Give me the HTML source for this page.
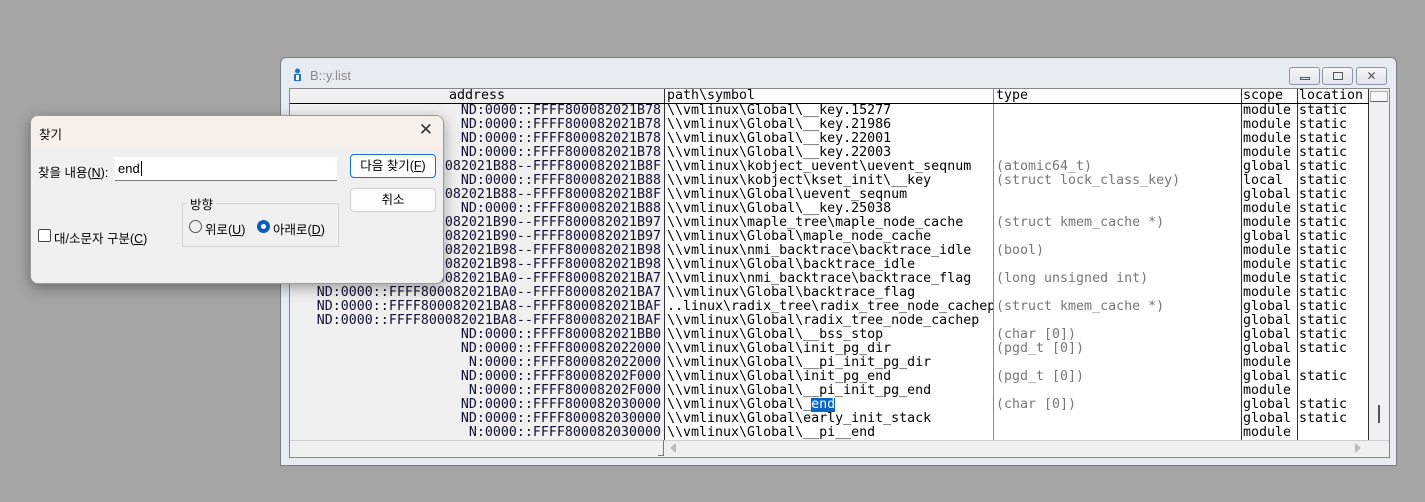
<!DOCTYPE html>
<html><head><meta charset="utf-8"><style>
*{margin:0;padding:0;box-sizing:border-box}
body{width:1425px;height:502px;background:#a5a5a5;position:relative;overflow:hidden;font-family:"DejaVu Sans Mono",monospace}
.win{position:absolute;left:280px;top:57px;width:1117px;height:409px;background:#e6ecf2;border:1px solid #7a7a7a;border-radius:6px 6px 0 0}
.title{position:absolute;left:29px;top:10px;font:13px "Liberation Sans",sans-serif;color:#8a8a8a}
.btn{position:absolute;top:9px;width:31px;height:18px;border:1px solid #8a96a4;border-radius:3px;background:linear-gradient(#f4f6f9,#e2e6ec)}
.tbl{position:absolute;left:8px;top:30px;width:1101px;height:370px;background:#f0f0f0;border:1px solid #888;overflow:hidden}
.col{position:absolute;top:0;height:351px;overflow:hidden;font-size:13.3px;line-height:14px;white-space:nowrap}
.hd{height:15px;border-bottom:1px solid #000;line-height:14px}
.r{height:14px;display:flex;overflow:hidden}
.addr .r{justify-content:flex-end;color:#101030;padding-right:3px}
.addr .hd{text-align:center}
.vl{position:absolute;top:0;width:1px;height:351px;background:#333}
.dlg{position:absolute;left:30px;top:115px;width:414px;height:169px;background:#f0f0f0;border-radius:8px;box-shadow:0 4px 14px rgba(0,0,0,.35);border:1px solid #9a9a9a;font:12.5px "Liberation Sans","Noto Sans CJK KR",sans-serif;color:#000;overflow:hidden}
.dt{height:33px;background:#f8f1eb;padding:8px 0 0 8px}
.db{position:absolute;border:1px solid #d0d0d0;border-radius:4px;background:#fdfdfd;text-align:center;line-height:22px;width:86px;height:24px}
</style></head><body>
<div class="win">
<svg style="position:absolute;left:11px;top:10px" width="11" height="14"><circle cx="5.5" cy="3" r="2.5" fill="#2a6ec0"/><rect x="2" y="6" width="7" height="7" fill="#2a6ec0"/><rect x="4" y="7" width="3" height="5" fill="#fff"/></svg>
<div class="title">B::y.list</div>
<div class="btn" style="left:1008px"><div style="position:absolute;left:10px;top:9px;width:10px;height:3px;border:1px solid #555"></div></div>
<div class="btn" style="left:1041px"><div style="position:absolute;left:10px;top:4px;width:10px;height:8px;border:1px solid #555"></div></div>
<div class="btn" style="left:1075px;font:12px sans-serif;text-align:center;color:#555;line-height:16px">✕</div>
<div class="tbl">
<div class="col addr" style="left:0;width:374px">
<div class="hd">address</div>
<div class="r">ND:0000::FFFF800082021B78</div>
<div class="r">ND:0000::FFFF800082021B78</div>
<div class="r">ND:0000::FFFF800082021B78</div>
<div class="r">ND:0000::FFFF800082021B78</div>
<div class="r">ND:0000::FFFF800082021B88--FFFF800082021B8F</div>
<div class="r">ND:0000::FFFF800082021B88</div>
<div class="r">ND:0000::FFFF800082021B88--FFFF800082021B8F</div>
<div class="r">ND:0000::FFFF800082021B88</div>
<div class="r">ND:0000::FFFF800082021B90--FFFF800082021B97</div>
<div class="r">ND:0000::FFFF800082021B90--FFFF800082021B97</div>
<div class="r">ND:0000::FFFF800082021B98--FFFF800082021B98</div>
<div class="r">ND:0000::FFFF800082021B98--FFFF800082021B98</div>
<div class="r">ND:0000::FFFF800082021BA0--FFFF800082021BA7</div>
<div class="r">ND:0000::FFFF800082021BA0--FFFF800082021BA7</div>
<div class="r">ND:0000::FFFF800082021BA8--FFFF800082021BAF</div>
<div class="r">ND:0000::FFFF800082021BA8--FFFF800082021BAF</div>
<div class="r">ND:0000::FFFF800082021BB0</div>
<div class="r">ND:0000::FFFF800082022000</div>
<div class="r">N:0000::FFFF800082022000</div>
<div class="r">ND:0000::FFFF80008202F000</div>
<div class="r">N:0000::FFFF80008202F000</div>
<div class="r">ND:0000::FFFF800082030000</div>
<div class="r">ND:0000::FFFF800082030000</div>
<div class="r">N:0000::FFFF800082030000</div>
</div>
<div class="col" style="left:375px;width:703px;background:#fff"></div>
<div class="col" style="left:376px;width:327px;padding-left:1px">
<div class="hd">path\symbol</div>
<div class="r">\\vmlinux\Global\__key.15277</div>
<div class="r">\\vmlinux\Global\__key.21986</div>
<div class="r">\\vmlinux\Global\__key.22001</div>
<div class="r">\\vmlinux\Global\__key.22003</div>
<div class="r">\\vmlinux\kobject_uevent\uevent_seqnum</div>
<div class="r">\\vmlinux\kobject\kset_init\__key</div>
<div class="r">\\vmlinux\Global\uevent_seqnum</div>
<div class="r">\\vmlinux\Global\__key.25038</div>
<div class="r">\\vmlinux\maple_tree\maple_node_cache</div>
<div class="r">\\vmlinux\Global\maple_node_cache</div>
<div class="r">\\vmlinux\nmi_backtrace\backtrace_idle</div>
<div class="r">\\vmlinux\Global\backtrace_idle</div>
<div class="r">\\vmlinux\nmi_backtrace\backtrace_flag</div>
<div class="r">\\vmlinux\Global\backtrace_flag</div>
<div class="r">..linux\radix_tree\radix_tree_node_cachep</div>
<div class="r">\\vmlinux\Global\radix_tree_node_cachep</div>
<div class="r">\\vmlinux\Global\__bss_stop</div>
<div class="r">\\vmlinux\Global\init_pg_dir</div>
<div class="r">\\vmlinux\Global\__pi_init_pg_dir</div>
<div class="r">\\vmlinux\Global\init_pg_end</div>
<div class="r">\\vmlinux\Global\__pi_init_pg_end</div>
<div class="r">\\vmlinux\Global\_<span style="background:#0a64c8;color:#fff">end</span></div>
<div class="r">\\vmlinux\Global\early_init_stack</div>
<div class="r">\\vmlinux\Global\__pi__end</div>
</div>
<div class="col" style="left:704px;width:247px;padding-left:2px;color:#777">
<div class="hd" style="color:#000">type</div>
<div class="r"></div><div class="r"></div><div class="r"></div><div class="r"></div>
<div class="r">(atomic64_t)</div>
<div class="r">(struct lock_class_key)</div>
<div class="r"></div><div class="r"></div>
<div class="r">(struct kmem_cache *)</div>
<div class="r"></div>
<div class="r">(bool)</div>
<div class="r"></div>
<div class="r">(long unsigned int)</div>
<div class="r"></div>
<div class="r">(struct kmem_cache *)</div>
<div class="r"></div>
<div class="r">(char [0])</div>
<div class="r">(pgd_t [0])</div>
<div class="r"></div>
<div class="r">(pgd_t [0])</div>
<div class="r"></div>
<div class="r">(char [0])</div>
<div class="r"></div><div class="r"></div>
</div>
<div class="col" style="left:952px;width:55px;padding-left:1px">
<div class="hd">scope</div>
<div class="r">module</div><div class="r">module</div><div class="r">module</div><div class="r">module</div>
<div class="r">global</div><div class="r">local</div><div class="r">global</div><div class="r">module</div>
<div class="r">module</div><div class="r">global</div><div class="r">module</div><div class="r">module</div>
<div class="r">module</div><div class="r">module</div><div class="r">global</div><div class="r">global</div>
<div class="r">global</div><div class="r">global</div><div class="r">module</div><div class="r">global</div>
<div class="r">module</div><div class="r">global</div><div class="r">global</div><div class="r">module</div>
</div>
<div class="col" style="left:1008px;width:70px;padding-left:1px">
<div class="hd">location</div>
<div class="r">static</div><div class="r">static</div><div class="r">static</div><div class="r">static</div>
<div class="r">static</div><div class="r">static</div><div class="r">static</div><div class="r">static</div>
<div class="r">static</div><div class="r">static</div><div class="r">static</div><div class="r">static</div>
<div class="r">static</div><div class="r">static</div><div class="r">static</div><div class="r">static</div>
<div class="r">static</div><div class="r">static</div><div class="r"></div><div class="r">static</div>
<div class="r"></div><div class="r">static</div><div class="r">static</div><div class="r"></div>
</div>
<div class="vl" style="left:374px"></div>
<div class="vl" style="left:703px;background:#888"></div>
<div class="vl" style="left:951px"></div>
<div class="vl" style="left:1007px"></div>
<div class="vl" style="left:1078px"></div>
<div style="position:absolute;left:0;top:14px;width:1079px;height:1px;background:#000"></div>
<div style="position:absolute;left:1080px;top:2px;width:18px;height:11px;border:1px solid #aaa;border-bottom-color:#666;background:#f6f6f6"></div>
<div style="position:absolute;left:1088px;top:316px;width:2px;height:18px;background:#555"></div>
<div style="position:absolute;left:0;top:351px;width:1101px;height:1px;background:#ccc"></div>
<div style="position:absolute;left:368px;top:351px;width:6px;height:16px;border-right:1px solid #777;border-bottom:1px solid #777"></div>
<div style="position:absolute;left:380px;top:354px;width:0;height:0;border:5px solid transparent;border-right:6px solid #bbb;border-left:0"></div>
<div style="position:absolute;left:1065px;top:354px;width:0;height:0;border:5px solid transparent;border-left:6px solid #bbb;border-right:0"></div>
</div>
</div>
<div class="dlg">
<div class="dt">찾기<span style="position:absolute;right:10px;top:4px;font-size:17px;color:#333">✕</span></div>
<div style="position:absolute;left:7px;top:46px">찾을 내용(<u>N</u>):</div>
<div style="position:absolute;left:84px;top:41px;width:222px;height:24px;background:#fff;border-bottom:1px solid #777;padding:4px 3px;font-size:13px">end<span style="border-left:1px solid #000;margin-left:1px"></span></div>
<div class="db" style="left:319px;top:38px;border-color:#1a6ec8;border-width:1px">다음 찾기(<u>F</u>)</div>
<div class="db" style="left:319px;top:72px">취소</div>
<div style="position:absolute;left:151px;top:87px;width:157px;height:44px;border:1px solid #d5d5d5"></div>
<div style="position:absolute;left:156px;top:78px;background:#f0f0f0;padding:0 3px">방향</div>
<div style="position:absolute;left:158px;top:104px;width:13px;height:13px;border:1px solid #555;border-radius:50%"></div>
<div style="position:absolute;left:174px;top:103px">위로(<u>U</u>)</div>
<div style="position:absolute;left:226px;top:104px;width:13px;height:13px;border-radius:50%;background:#0a5fb8"><div style="position:absolute;left:4px;top:4px;width:5px;height:5px;border-radius:50%;background:#fff"></div></div>
<div style="position:absolute;left:242px;top:103px">아래로(<u>D</u>)</div>
<div style="position:absolute;left:7px;top:113px;width:13px;height:13px;border:1px solid #444;border-radius:2px;background:#fff"></div>
<div style="position:absolute;left:23px;top:112px">대/소문자 구분(<u>C</u>)</div>
</div>
</body></html>
